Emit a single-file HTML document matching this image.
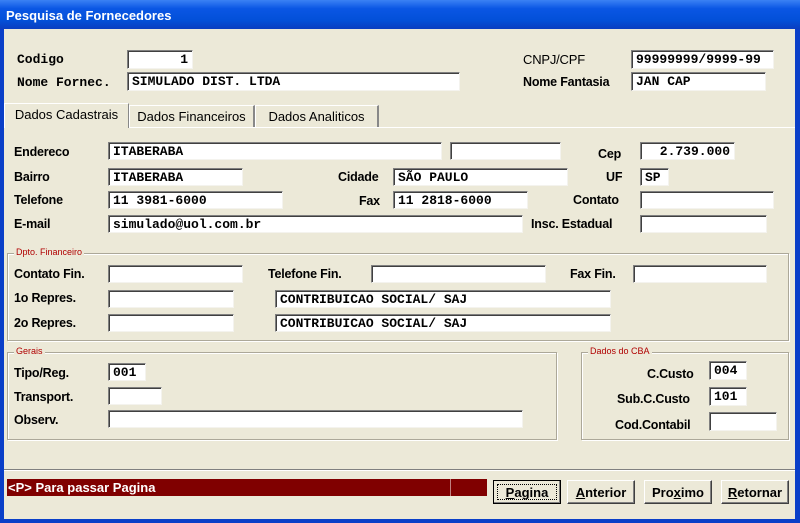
<!DOCTYPE html>
<html><head><meta charset="utf-8"><style>
*{margin:0;padding:0;box-sizing:border-box}
body{width:800px;height:523px;overflow:hidden;background:#0a3fc8;position:relative;font-family:"Liberation Sans",Arial,sans-serif}
#title{position:absolute;left:0;top:0;width:800px;height:29px;background:linear-gradient(#3b82f4,#0a56e4 30%,#0350d8 70%,#0a3ec0);color:#fff;font-weight:bold;font-size:13px;padding:8px 0 0 6px}
#win{position:absolute;left:4px;top:29px;width:791px;height:490px;background:#ece9d8;overflow:hidden}
.a{position:absolute}
.l{position:absolute;font-weight:bold;font-size:12.5px;color:#000;white-space:nowrap;letter-spacing:-0.2px}
.m{font-family:"Liberation Mono",monospace;letter-spacing:0}
.i{position:absolute;background:#fff;border-top:1px solid #808080;border-left:1px solid #808080;border-right:1px solid #f4f3ee;border-bottom:1px solid #f4f3ee;box-shadow:inset 1px 1px 0 #404040;font-family:"Liberation Mono",monospace;font-weight:bold;font-size:13px;line-height:14px;padding:2px 0 0 4px;white-space:nowrap;overflow:hidden}
.g{position:absolute;border:1px solid #aca899;box-shadow:1px 1px 0 #fff, inset 1px 1px 0 #fff}
.gt{position:absolute;top:-7px;left:6px;background:#ece9d8;color:#b00000;font-size:9px;padding:0 2px}
.tab{position:absolute;top:76px;height:22px;font-size:13px;padding:3px 0 0 0;text-align:center;border-right:2px solid #888;border-top:1px solid #fff;border-left:1px solid #fff}
.btn{position:absolute;top:451px;height:24px;background:#ece9d8;border:1px solid #fff;border-right:1px solid #404040;border-bottom:1px solid #404040;box-shadow:inset -1px -1px 0 #808080;font-weight:bold;font-size:13px;text-align:center;padding-top:4px}
</style></head><body>
<div id="title">Pesquisa de Fornecedores</div>
<div id="win">
<div class="l m" style="left:13px;top:23px;font-size:13px">Codigo</div>
<div class="i" style="left:123px;top:21px;width:66px;height:19px;text-align:right;padding-right:4px">1</div>
<div class="l m" style="left:13px;top:46px;font-size:13px">Nome Fornec.</div>
<div class="i" style="left:123px;top:43px;width:333px;height:19px">SIMULADO DIST. LTDA</div>
<div class="l" style="left:519px;top:23px;font-weight:normal;font-size:13px">CNPJ/CPF</div>
<div class="i" style="left:627px;top:21px;width:143px;height:19px">99999999/9999-99</div>
<div class="l" style="left:519px;top:46px">Nome Fantasia</div>
<div class="i" style="left:627px;top:43px;width:135px;height:19px">JAN CAP</div>
<div class="a" style="left:0;top:98px;width:791px;height:1px;background:#fff"></div>
<div class="tab" style="left:0;width:125px;top:74px;height:25px;background:#ece9d8;border-right:1px solid #888">Dados Cadastrais</div>
<div class="tab" style="left:125px;width:126px">Dados Financeiros</div>
<div class="tab" style="left:251px;width:124px">Dados Analiticos</div>
<div class="l" style="left:10px;top:116px">Endereco</div>
<div class="i" style="left:104px;top:113px;width:334px;height:18px">ITABERABA</div>
<div class="i" style="left:446px;top:113px;width:111px;height:18px"></div>
<div class="l" style="left:594px;top:118px">Cep</div>
<div class="i" style="left:636px;top:113px;width:95px;height:18px;text-align:right;padding-right:4px">2.739.000</div>
<div class="l" style="left:10px;top:141px">Bairro</div>
<div class="i" style="left:104px;top:139px;width:135px;height:18px">ITABERABA</div>
<div class="l" style="left:334px;top:141px">Cidade</div>
<div class="i" style="left:389px;top:139px;width:175px;height:18px">SÃO PAULO</div>
<div class="l" style="left:602px;top:141px">UF</div>
<div class="i" style="left:636px;top:139px;width:29px;height:18px">SP</div>
<div class="l" style="left:10px;top:164px">Telefone</div>
<div class="i" style="left:104px;top:162px;width:175px;height:18px">11 3981-6000</div>
<div class="l" style="left:355px;top:165px">Fax</div>
<div class="i" style="left:389px;top:162px;width:135px;height:18px">11 2818-6000</div>
<div class="l" style="left:569px;top:164px">Contato</div>
<div class="i" style="left:636px;top:162px;width:134px;height:18px"></div>
<div class="l" style="left:10px;top:188px">E-mail</div>
<div class="i" style="left:104px;top:186px;width:415px;height:18px">simulado@uol.com.br</div>
<div class="l" style="left:527px;top:188px">Insc. Estadual</div>
<div class="i" style="left:636px;top:186px;width:127px;height:18px"></div>
<div class="g" style="left:3px;top:224px;width:782px;height:88px"><span class="gt">Dpto. Financeiro</span></div>
<div class="l" style="left:10px;top:238px">Contato Fin.</div>
<div class="i" style="left:104px;top:236px;width:135px;height:18px"></div>
<div class="l" style="left:264px;top:238px">Telefone Fin.</div>
<div class="i" style="left:367px;top:236px;width:175px;height:18px"></div>
<div class="l" style="left:566px;top:238px">Fax Fin.</div>
<div class="i" style="left:629px;top:236px;width:134px;height:18px"></div>
<div class="l" style="left:10px;top:262px">1o Repres.</div>
<div class="i" style="left:104px;top:261px;width:126px;height:18px"></div>
<div class="i" style="left:271px;top:261px;width:336px;height:18px">CONTRIBUICAO SOCIAL/ SAJ</div>
<div class="l" style="left:10px;top:287px">2o Repres.</div>
<div class="i" style="left:104px;top:285px;width:126px;height:18px"></div>
<div class="i" style="left:271px;top:285px;width:336px;height:18px">CONTRIBUICAO SOCIAL/ SAJ</div>
<div class="g" style="left:3px;top:323px;width:550px;height:88px"><span class="gt">Gerais</span></div>
<div class="l" style="left:10px;top:337px">Tipo/Reg.</div>
<div class="i" style="left:104px;top:334px;width:38px;height:18px">001</div>
<div class="l" style="left:10px;top:361px">Transport.</div>
<div class="i" style="left:104px;top:358px;width:54px;height:18px"></div>
<div class="l" style="left:10px;top:384px">Observ.</div>
<div class="i" style="left:104px;top:381px;width:415px;height:18px"></div>
<div class="g" style="left:577px;top:323px;width:208px;height:88px"><span class="gt">Dados do CBA</span></div>
<div class="l" style="left:643px;top:338px">C.Custo</div>
<div class="i" style="left:705px;top:332px;width:38px;height:19px">004</div>
<div class="l" style="left:613px;top:363px">Sub.C.Custo</div>
<div class="i" style="left:705px;top:358px;width:38px;height:19px">101</div>
<div class="l" style="left:611px;top:389px">Cod.Contabil</div>
<div class="i" style="left:705px;top:383px;width:68px;height:19px"></div>
<div class="a" style="left:0;top:440px;width:791px;height:1px;background:#808080"></div>
<div class="a" style="left:0;top:441px;width:791px;height:1px;background:#fff"></div>
<div class="a" style="left:3px;top:450px;width:480px;height:17px;background:#800000;color:#fff;font-weight:bold;font-size:13px;padding:1px 0 0 1px">&lt;P&gt; Para passar Pagina</div>
<div class="a" style="left:446px;top:450px;width:1px;height:17px;background:#c08080"></div>
<div class="btn" style="left:489px;width:68px;border:1px solid #000;outline:1px dotted #000;outline-offset:-5px"><u>P</u>agina</div>
<div class="btn" style="left:563px;width:68px"><u>A</u>nterior</div>
<div class="btn" style="left:640px;width:68px">Pro<u>x</u>imo</div>
<div class="btn" style="left:717px;width:68px"><u>R</u>etornar</div>
</div>
</body></html>
